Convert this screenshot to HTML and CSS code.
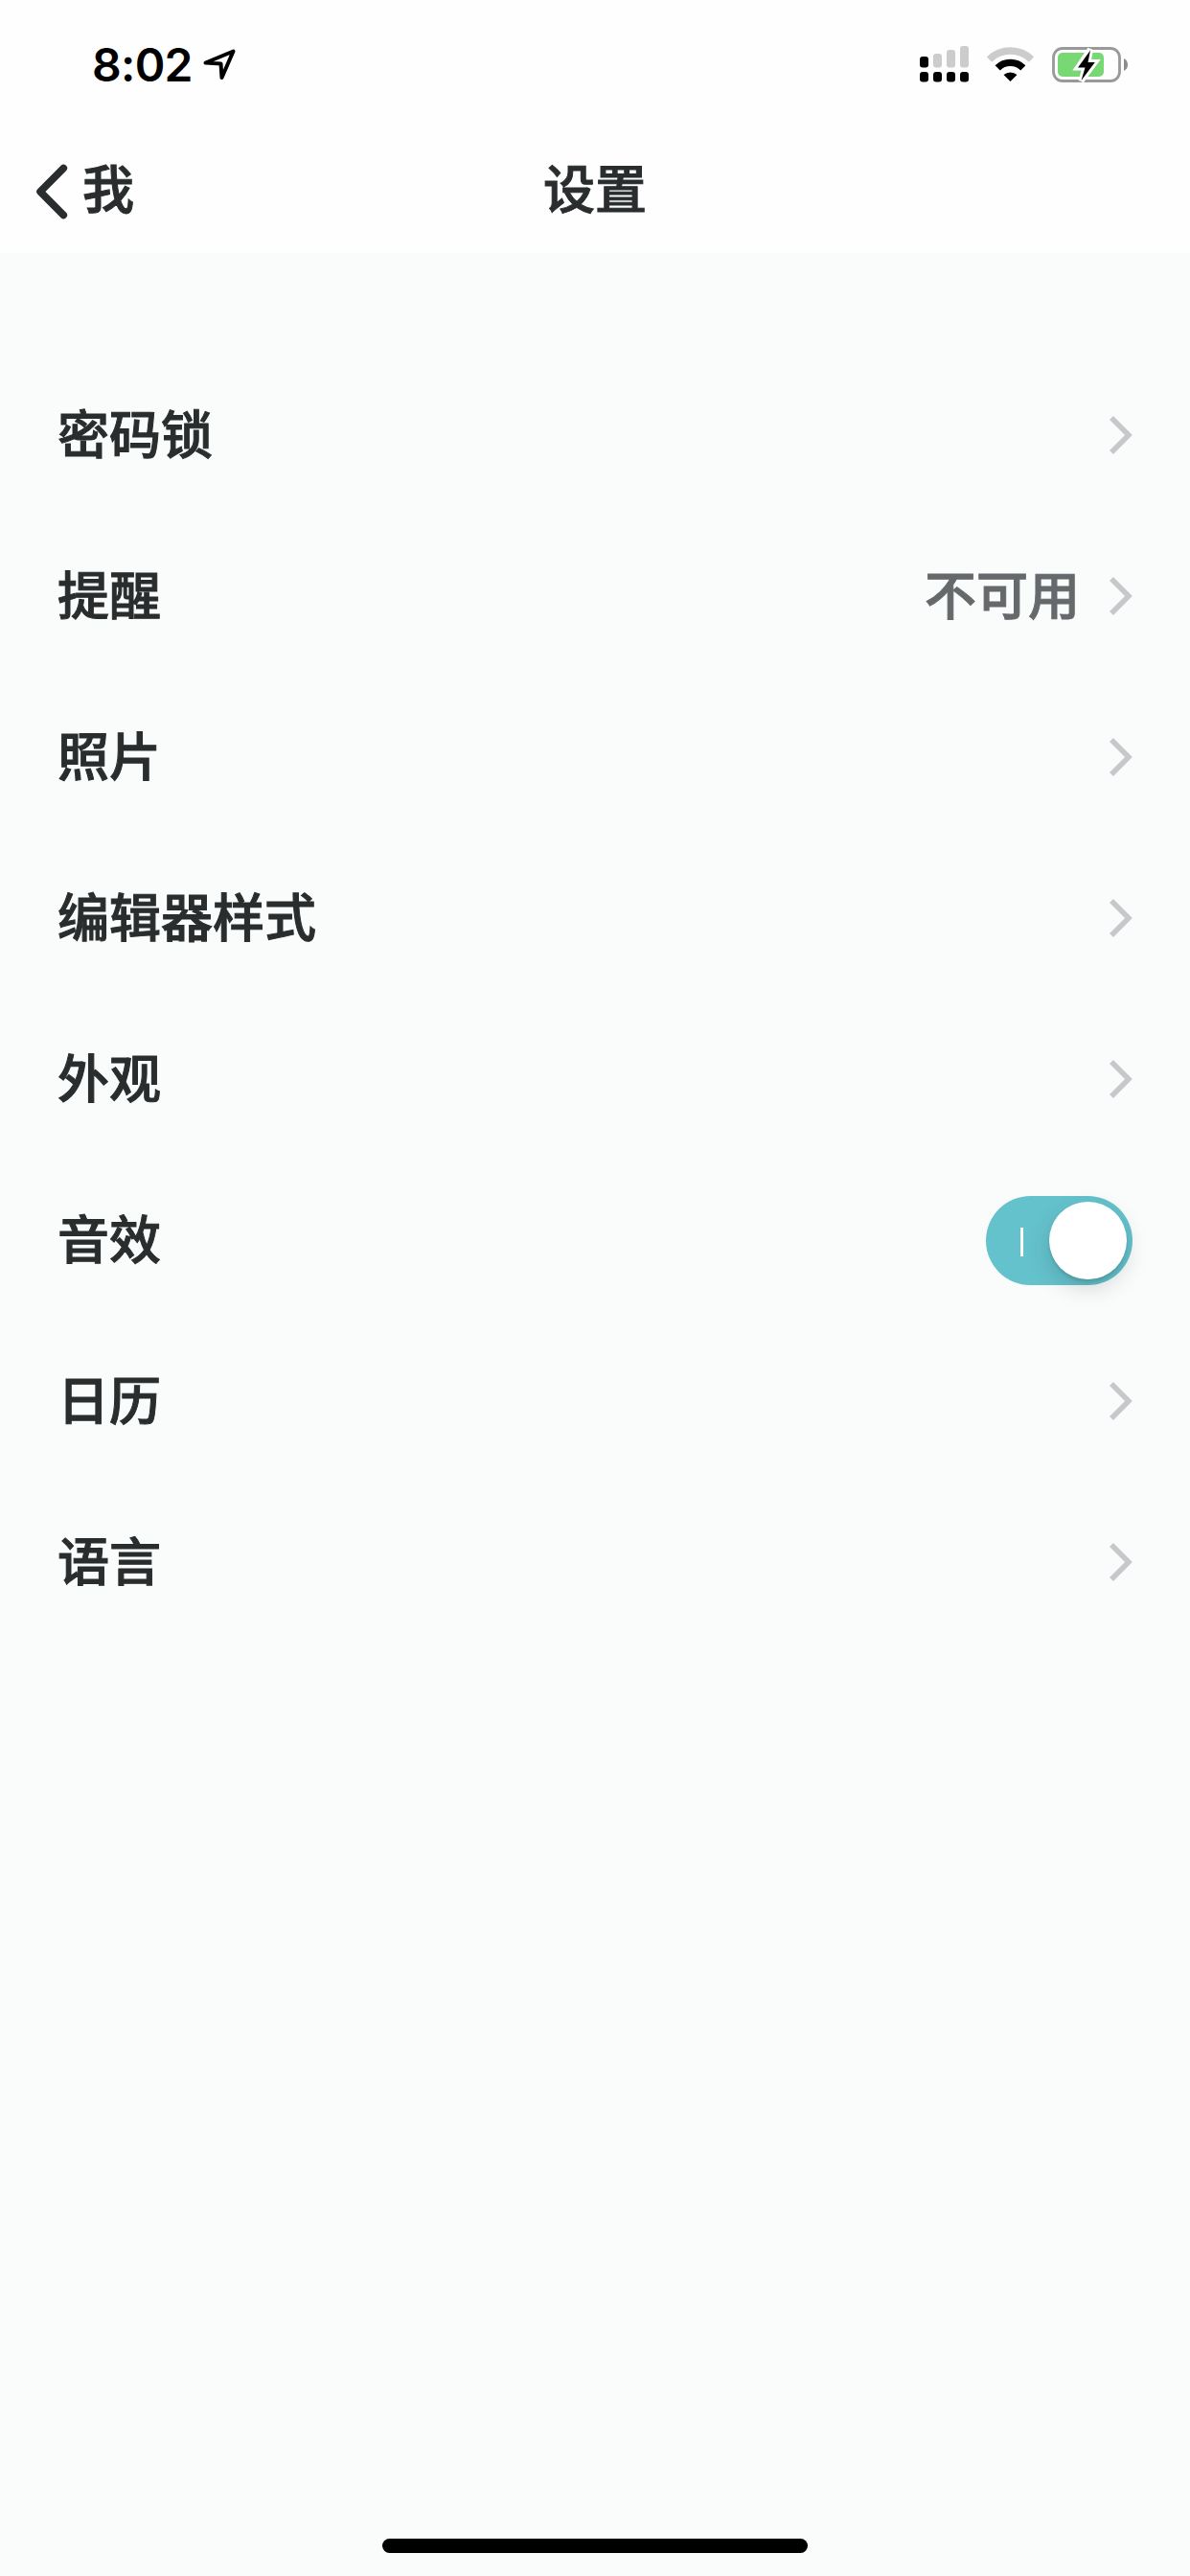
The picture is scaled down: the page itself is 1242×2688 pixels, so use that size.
FILE: index.html
```html
<!DOCTYPE html>
<html lang="zh-CN">
<head>
    <meta charset="UTF-8">
    <meta name="viewport" content="width=device-width, initial-scale=1.0">
    <title>设置</title>
    <link rel="stylesheet" href="styles.css">
</head>
<body>
    <div class="screen">
        <header class="header">
            <div class="status-bar">
                <div class="status-left">
                    <span class="time">8:02</span>
                    <svg class="location" width="36" height="36" viewBox="0 0 36 36">
                        <path d="M4.5 17.5 L33.5 5.5 L21.5 33 L20.5 18.5 Z" fill="none" stroke="#000" stroke-width="4" stroke-linejoin="round"/>
                    </svg>
                </div>
                <div class="status-right">
                    <svg width="52" height="40" viewBox="0 0 52 40">
                        <g fill="#ccc">
                            <rect x="14" y="8" width="9" height="14.5" rx="3"/>
                            <rect x="28" y="4" width="9" height="18.5" rx="3"/>
                            <rect x="42" y="0" width="9" height="22.5" rx="3"/>
                        </g>
                        <rect x="0" y="11" width="9" height="11.5" rx="3"/>
                        <rect x="0" y="27" width="9" height="10.5" rx="3"/>
                        <rect x="14" y="27" width="9" height="10.5" rx="3"/>
                        <rect x="28" y="27" width="9" height="10.5" rx="3"/>
                        <rect x="42" y="27" width="9" height="10.5" rx="3"/>
                    </svg>
                    <svg class="wifi" width="50" height="40" viewBox="0 0 50 40">
                        <path d="M2.5 14 A31.5 31.5 0 0 1 46.5 14" fill="none" stroke="#ccc" stroke-width="7.5"/>
                        <path d="M11.2 22.8 A19 19 0 0 1 37.8 22.8" fill="none" stroke="#000" stroke-width="7.4"/>
                        <path d="M17.5 30 A11 11 0 0 1 31.5 30 L24.5 37 Z"/>
                    </svg>
                    <svg class="battery" width="80" height="40" viewBox="0 0 80 40">
                        <rect x="1.5" y="2.5" width="69" height="34" rx="9.5" fill="none" stroke="#999" stroke-width="2.8"/>
                        <path d="M75 13 Q79 15 79 19.5 Q79 24 75 26 Z" fill="#8c8c8c"/>
                        <rect x="6" y="7" width="48" height="25" rx="5" fill="#78d873"/>
                        <path d="M40 3.5 L27 22.5 L34.5 22.5 L30.5 36.5 L44.8 17 L37.5 17 Z" fill="#fff" stroke="#fff" stroke-width="6"/>
                        <path d="M40 4.5 L27 22.5 L34.5 22.5 L30.5 36 L44.8 17 L37.5 17 Z"/>
                    </svg>
                </div>
            </div>
            <nav class="nav">
                <a class="back">
                    <svg width="36" height="60" viewBox="0 0 36 60">
                        <path d="M30.3 5.5 L6 30 L30.3 54.5" fill="none" stroke="#2a2d2e" stroke-width="7.6" stroke-linecap="round" stroke-linejoin="round"/>
                    </svg>
                    <span>我</span>
                </a>
                <h1 class="title">设置</h1>
            </nav>
        </header>

        <ul class="settings">
            <li class="row">
                <span class="label">密码锁</span>
                <svg class="chevron" viewBox="0 0 25 40"><path d="M3 2 L21 20 L3 38"/></svg>
            </li>
            <li class="row">
                <span class="label">提醒</span>
                <span class="value">不可用</span>
                <svg class="chevron" viewBox="0 0 25 40"><path d="M3 2 L21 20 L3 38"/></svg>
            </li>
            <li class="row">
                <span class="label">照片</span>
                <svg class="chevron" viewBox="0 0 25 40"><path d="M3 2 L21 20 L3 38"/></svg>
            </li>
            <li class="row">
                <span class="label">编辑器样式</span>
                <svg class="chevron" viewBox="0 0 25 40"><path d="M3 2 L21 20 L3 38"/></svg>
            </li>
            <li class="row">
                <span class="label">外观</span>
                <svg class="chevron" viewBox="0 0 25 40"><path d="M3 2 L21 20 L3 38"/></svg>
            </li>
            <li class="row">
                <span class="label">音效</span>
                <div class="switch">
                    <span class="switch-mark"></span>
                    <span class="switch-knob"></span>
                </div>
            </li>
            <li class="row">
                <span class="label">日历</span>
                <svg class="chevron" viewBox="0 0 25 40"><path d="M3 2 L21 20 L3 38"/></svg>
            </li>
            <li class="row">
                <span class="label">语言</span>
                <svg class="chevron" viewBox="0 0 25 40"><path d="M3 2 L21 20 L3 38"/></svg>
            </li>
        </ul>

        <div class="home-bar"></div>
    </div>
</body>
</html>
```
FILE: styles.css
```css
* {
    margin: 0;
    padding: 0;
    box-sizing: border-box;
}

body {
    font-family: "Noto Sans CJK SC", sans-serif;
    font-size: 54px;
    font-weight: 500;
    line-height: 80px;
    color: #2a2d2e;
    background: #fafcfc;
}

svg {
    display: block;
    flex-shrink: 0;
}

.screen {
    display: flex;
    flex-direction: column;
    height: 2688px;
    padding-bottom: 24px;
}

.header {
    height: 264px;
    background: #fefefe;
}

.status-bar {
    display: flex;
    justify-content: space-between;
    height: 132px;
    padding: 48px 64px 0 96px;
}

.status-left {
    display: flex;
    gap: 9px;
}

.time {
    font-family: Inter, sans-serif;
    font-size: 48px;
    font-weight: 600;
    line-height: 40px;
    letter-spacing: -0.7px;
    color: #000;
}

.status-right {
    display: flex;
}

.wifi,
.battery {
    margin-left: 18px;
}

.nav {
    display: grid;
    grid-template-columns: 1fr auto 1fr;
    align-items: center;
    height: 132px;
    padding: 4px 36px 0;
}

.back {
    display: flex;
    align-items: center;
    gap: 14px;
}

/* slightly heavier than the medium weight */
.back span,
.title,
.label,
.value {
    -webkit-text-stroke: 1px currentColor;
}

.back span,
.title {
    padding-bottom: 10px;
}

.title {
    font-size: 54px;
    font-weight: 500;
}

.settings {
    flex: 1;
    margin-top: 106px;
    padding: 0 60px;
    list-style: none;
}

.row {
    display: flex;
    align-items: center;
    height: 168px;
}

.label,
.value {
    padding-bottom: 6px;
}

.label {
    flex: 1;
}

.value {
    margin-right: 30px;
    color: #66696c;
}

.chevron {
    width: 25px;
    height: 40px;
    fill: none;
    stroke: #c7c7cc;
    stroke-width: 5.5;
}

.switch {
    display: flex;
    align-items: center;
    justify-content: space-between;
    width: 153px;
    height: 93px;
    padding: 0 6px 0 36px;
    border-radius: 47px;
    background: #64c2cc;
}

.switch-mark {
    width: 3px;
    height: 30px;
    margin-top: 4px;
    background: #fff;
}

.switch-knob {
    width: 81px;
    height: 81px;
    border-radius: 50%;
    background: #fff;
    box-shadow: 0 9px 24px rgba(0, 0, 0, 0.15), 0 3px 3px rgba(0, 0, 0, 0.1);
}

.home-bar {
    width: 444px;
    height: 15px;
    margin: 0 auto;
    border-radius: 8px;
    background: #000;
}
```
